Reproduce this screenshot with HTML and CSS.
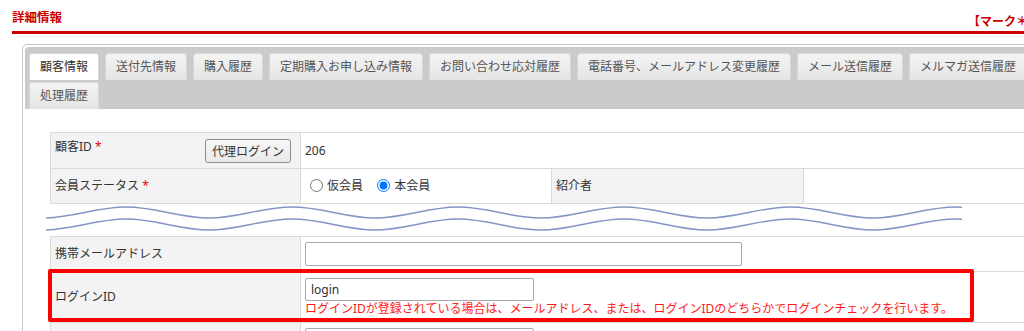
FILE: index.html
```html
<!DOCTYPE html>
<html lang="ja">
<head>
  <meta charset="UTF-8">
  <meta name="viewport" content="width=device-width, initial-scale=1.0">
  <title>詳細情報</title>
  <link rel="stylesheet" href="styles.css">
</head>
<body>

<div class="page">
  <div class="page-head">
    <h2 class="page-title">詳細情報</h2>
    <span class="page-note">【マーク＊は必須項目です】</span>
  </div>

  <div class="panel">
    <ul class="tabs">
      <li class="tab active">顧客情報</li>
      <li class="tab">送付先情報</li>
      <li class="tab">購入履歴</li>
      <li class="tab">定期購入お申し込み情報</li>
      <li class="tab">お問い合わせ応対履歴</li>
      <li class="tab">電話番号、メールアドレス変更履歴</li>
      <li class="tab">メール送信履歴</li>
      <li class="tab">メルマガ送信履歴</li>
      <li class="tab">処理履歴</li>
    </ul>

    <div class="panel-body">
      <table class="detail">
        <colgroup>
          <col class="col-label">
          <col class="col-value">
          <col class="col-label2">
          <col>
        </colgroup>
        <tr class="row-id">
          <th class="label">
            <div class="label-inner">
              <span>顧客ID <em class="req">*</em></span>
              <button type="button" class="btn">代理ログイン</button>
            </div>
          </th>
          <td colspan="3">206</td>
        </tr>
        <tr class="row-status">
          <th class="label">会員ステータス <em class="req">*</em></th>
          <td>
            <label class="radio"><input type="radio" name="status">仮会員</label>
            <label class="radio"><input type="radio" name="status" checked>本会員</label>
          </td>
          <th class="label">紹介者</th>
          <td></td>
        </tr>
      </table>

      <div class="cut">
        <svg width="916" height="28" viewBox="0 0 916 28">
          <g fill="none" stroke="#8395c4" stroke-width="1.4">
            <path id="wave" d="M-3 13 C27 13 50 2 80 2 S133 13 163 13 S216 2 246 2 S299 13 329 13 S382 2 412 2 S465 13 495 13 S548 2 578 2 S631 13 661 13 S714 2 744 2 S797 13 827 13 S880 2 910 2 S963 13 993 13"/>
            <use href="#wave" transform="translate(0 12)"/>
          </g>
        </svg>
      </div>

      <div class="annotated">
        <table class="detail">
          <colgroup>
            <col class="col-label">
            <col>
          </colgroup>
          <tr class="row-mail">
            <th class="label">携帯メールアドレス</th>
            <td><input type="text" class="field field-wide"></td>
          </tr>
          <tr class="row-login">
            <th class="label">ログインID</th>
            <td>
              <input type="text" class="field field-short" value="login">
              <p class="hint">ログインIDが登録されている場合は、メールアドレス、または、ログインIDのどちらかでログインチェックを行います。</p>
            </td>
          </tr>
          <tr class="row-next">
            <th class="label"></th>
            <td><input type="text" class="field field-short"></td>
          </tr>
        </table>
        <div class="highlight"></div>
      </div>
    </div>
  </div>
</div>

</body>
</html>
```

FILE: styles.css
```css
* {
  margin: 0;
  padding: 0;
  box-sizing: border-box;
}

body {
  font-family: "Noto Sans", "Noto Sans CJK JP", sans-serif;
  font-size: 12px;
  color: #333;
  background-color: #fff;
  overflow: hidden;
}

.page {
  width: 1092px;
  padding: 9px 0 0 12px;
}

.page-head {
  display: flex;
  align-items: flex-end;
  padding-bottom: 2px;
  border-bottom: 3px solid #cc0000;
}

.page-title {
  flex-shrink: 0;
  width: 956px;
  margin-bottom: 2px;
  font-size: 12.5px;
  line-height: 18px;
  color: #cc0000;
}

.page-note {
  font-size: 12px;
  font-weight: bold;
  line-height: 14px;
  color: #cc0000;
  white-space: nowrap;
}

.panel {
  margin: 10px 0 0 10px;
  padding: 2px;
  border: 1px solid #c8c8c8;
  border-radius: 5px;
  height: 320px;
}

.tabs {
  display: flex;
  flex-wrap: wrap;
  gap: 2px 6px;
  padding: 6px 4px 0;
  list-style: none;
  background-color: #cbcbcb;
  border-radius: 4px 4px 0 0;
}

.tab {
  height: 27px;
  line-height: 25px;
  padding: 0 10px;
  border: 1px solid #d8d8d8;
  border-bottom: none;
  border-radius: 3px 3px 0 0;
  background: linear-gradient(#f4f4f4, #e4e4e4);
  color: #555;
  white-space: nowrap;
}

.tab.active {
  background: #fff;
  color: #333;
}

.panel-body {
  padding: 23px 0 0 25px;
}

.detail {
  width: 1000px;
  border-collapse: collapse;
  table-layout: fixed;
}

.col-label {
  width: 250px;
}

.col-value {
  width: 251px;
}

.col-label2 {
  width: 252px;
}

.detail th,
.detail td {
  border: 1px solid #d9d9d9;
  padding: 0 4px;
  text-align: left;
  vertical-align: middle;
  line-height: 16px;
}

.detail .label {
  background-color: #f2f3f2;
  font-weight: normal;
}

.req {
  font-style: normal;
  color: #e00;
}

.row-id th {
  padding: 5px 9px 5px 4px;
}

.row-id td {
  height: 36px;
}

.label-inner {
  display: flex;
  justify-content: space-between;
  align-items: flex-start;
}

.btn {
  height: 24px;
  padding: 0 6px;
  border: 1px solid #8f8f8f;
  border-radius: 3px;
  background: linear-gradient(#f6f6f6, #e9e9e9);
  font-family: inherit;
  font-size: 12px;
  color: #333;
}

.row-status td,
.row-status th {
  height: 35px;
}

.radio {
  margin-right: 6px;
}

.radio input {
  margin: 0 4px 0 5px;
  vertical-align: -2px;
}

.cut {
  height: 31px;
}

.cut svg {
  display: block;
  margin: 1px 0 0 -4px;
}

.annotated {
  position: relative;
}

.row-mail td,
.row-mail th {
  height: 35px;
}

.row-login td {
  padding: 6px 4px 6px 4px;
}

.row-mail td,
.row-next td {
  padding: 5px 4px 5px 4px;
}

.field {
  display: block;
  height: 24px;
  padding: 0 5px;
  border: 1px solid #a9a9a9;
  border-radius: 2px;
  font-family: inherit;
  font-size: 12px;
  color: #333;
}

.field-wide {
  width: 437px;
}

.field-short {
  width: 229px;
  height: 23px;
}

.hint {
  margin-top: 1px;
  line-height: 14px;
  color: #ff1a1a;
  white-space: nowrap;
}

.highlight {
  position: absolute;
  left: -2px;
  top: 33px;
  width: 926px;
  height: 53px;
  border: 4px solid #ff0000;
  border-radius: 2px;
  pointer-events: none;
}
```
